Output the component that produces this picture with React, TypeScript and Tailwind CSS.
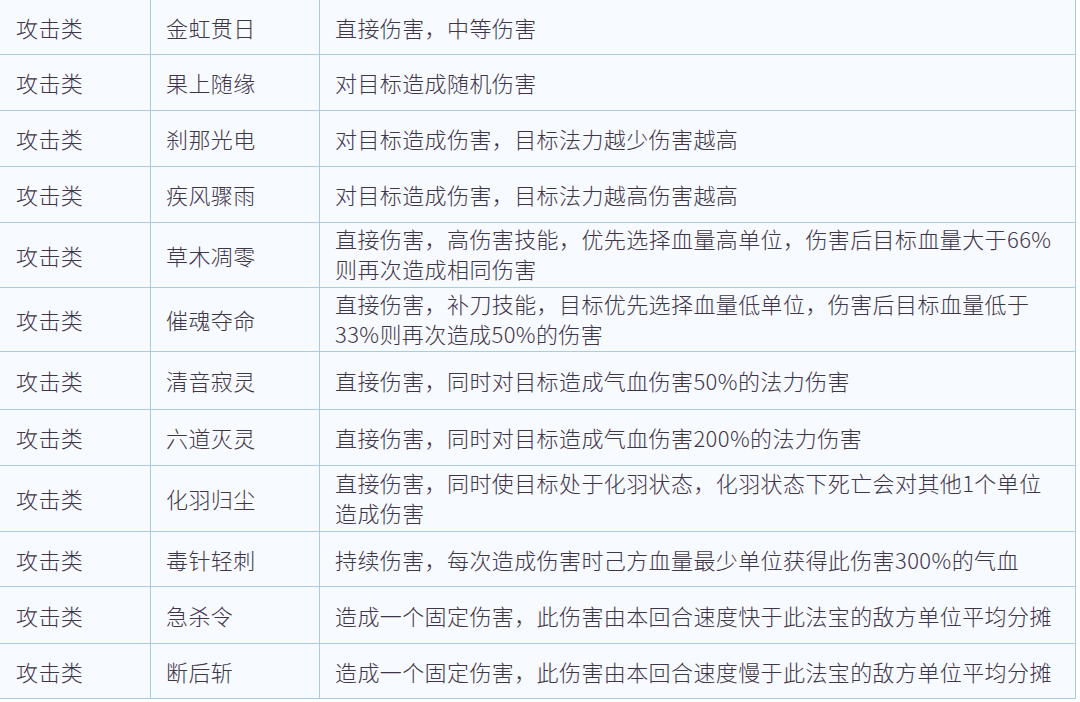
import React from 'react';

type Row = { kind: string; name: string; desc: string[]; h: number };

const rows: Row[] = [
  { kind: '攻击类', name: '金虹贯日', desc: ['直接伤害，中等伤害'], h: 55 },
  { kind: '攻击类', name: '果上随缘', desc: ['对目标造成随机伤害'], h: 56 },
  { kind: '攻击类', name: '刹那光电', desc: ['对目标造成伤害，目标法力越少伤害越高'], h: 56 },
  { kind: '攻击类', name: '疾风骤雨', desc: ['对目标造成伤害，目标法力越高伤害越高'], h: 56 },
  {
    kind: '攻击类',
    name: '草木凋零',
    desc: ['直接伤害，高伤害技能，优先选择血量高单位，伤害后目标血量大于66%', '则再次造成相同伤害'],
    h: 65,
  },
  {
    kind: '攻击类',
    name: '催魂夺命',
    desc: ['直接伤害，补刀技能，目标优先选择血量低单位，伤害后目标血量低于', '33%则再次造成50%的伤害'],
    h: 64,
  },
  { kind: '攻击类', name: '清音寂灵', desc: ['直接伤害，同时对目标造成气血伤害50%的法力伤害'], h: 58 },
  { kind: '攻击类', name: '六道灭灵', desc: ['直接伤害，同时对目标造成气血伤害200%的法力伤害'], h: 56 },
  {
    kind: '攻击类',
    name: '化羽归尘',
    desc: ['直接伤害，同时使目标处于化羽状态，化羽状态下死亡会对其他1个单位', '造成伤害'],
    h: 66,
  },
  { kind: '攻击类', name: '毒针轻刺', desc: ['持续伤害，每次造成伤害时己方血量最少单位获得此伤害300%的气血'], h: 55 },
  { kind: '攻击类', name: '急杀令', desc: ['造成一个固定伤害，此伤害由本回合速度快于此法宝的敌方单位平均分摊'], h: 57 },
  { kind: '攻击类', name: '断后斩', desc: ['造成一个固定伤害，此伤害由本回合速度慢于此法宝的敌方单位平均分摊'], h: 55 },
];

export default function App() {
  return (
    <div
      className="w-[1080px] h-[702px] overflow-hidden bg-white text-[#3f3548] text-[22px] font-light tracking-[0.4px]"
      style={{ fontFamily: '"Noto Sans CJK SC", "Noto Sans", sans-serif' }}
    >
      <div className="w-[1076px] bg-[#f7faff]">
        {rows.map((r, i) => (
          <div
            key={i}
            className="flex border-b border-[#a9cbe6]"
            style={{ height: r.h }}
          >
            <div className="w-[151px] shrink-0 flex items-center pl-4 border-r border-[#a9cbe6]">
              {r.kind}
            </div>
            <div className="w-[169px] shrink-0 flex items-center pl-[15px] border-r border-[#a9cbe6]">
              {r.name}
            </div>
            <div
              className={`w-[756px] shrink-0 flex items-center pl-[15px] border-r border-[#a9cbe6] whitespace-nowrap ${
                r.desc.length > 1 ? 'pb-1 leading-[30px]' : ''
              }`}
            >
              <div>
                {r.desc.map((d, j) => (
                  <div key={j}>{d}</div>
                ))}
              </div>
            </div>
          </div>
        ))}
      </div>
    </div>
  );
}
